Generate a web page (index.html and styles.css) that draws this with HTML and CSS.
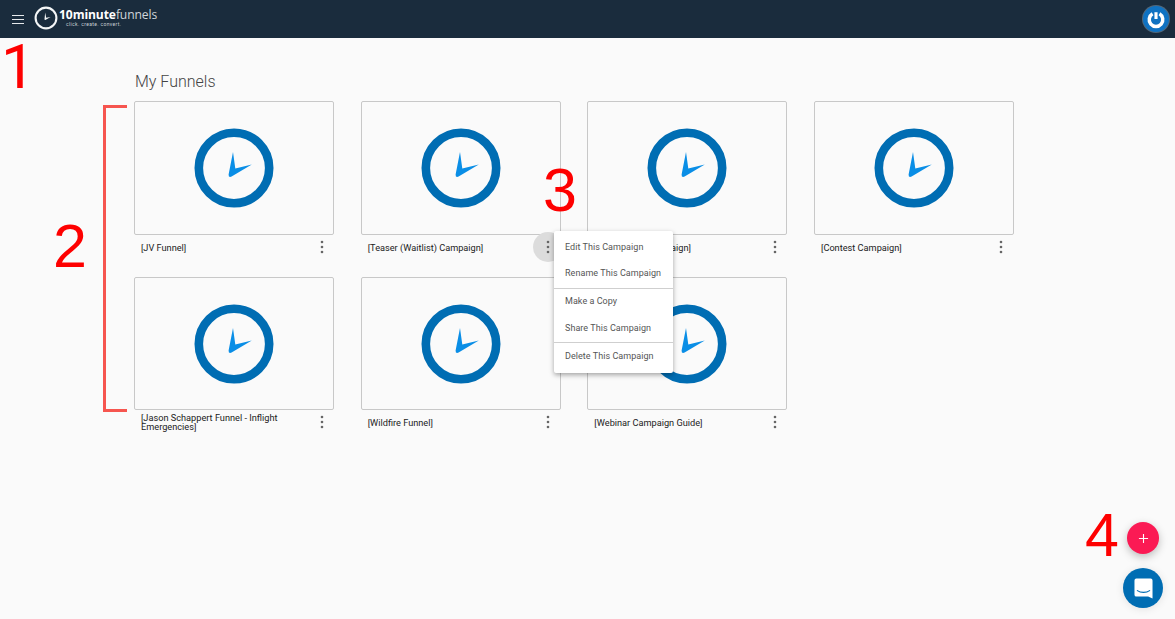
FILE: index.html
```html
<!DOCTYPE html>
<html lang="en">
<head>
<meta charset="utf-8">
<title>My Funnels</title>
<link rel="stylesheet" href="styles.css">
</head>
<body>
<svg class="defs" width="0" height="0" aria-hidden="true">
  <symbol id="clock" viewBox="0 0 80 80">
    <circle cx="40" cy="40" r="35.2" fill="none" stroke="#006db3" stroke-width="8.6"/>
    <path d="M39 24 L41.3 40.4 L57.8 36.6 L37.6 48.6 Q34.4 49.8 34.6 46.4 Z" fill="#0a8ee6"/>
  </symbol>
  <symbol id="dots" viewBox="0 0 4 14">
    <circle cx="2" cy="2" r="1.3"/><circle cx="2" cy="7" r="1.3"/><circle cx="2" cy="12" r="1.3"/>
  </symbol>
</svg>

<header class="topbar">
  <button class="menu-btn" aria-label="Menu"><span></span><span></span><span></span></button>
  <div class="logo">
    <svg class="logo-mark" viewBox="0 0 24 24">
      <circle cx="12" cy="12" r="10.4" fill="none" stroke="#f4f6f7" stroke-width="2.1"/>
      <path d="M11.2 6.6 L12.2 11.8 L16.6 11 L11.8 13.8 Q10.4 14.2 10.5 13 Z" fill="#f4f6f7"/>
    </svg>
    <div class="logo-text">
      <div class="logo-name"><b>10minute</b>funnels</div>
      <div class="logo-tag">click. create. convert.</div>
    </div>
  </div>
  <div class="avatar">
    <svg viewBox="0 0 24 24" width="22" height="22">
      <path d="M8.2 6.4 A7.4 7.4 0 1 0 15.8 6.4" fill="none" stroke="#fff" stroke-width="3.8"/>
      <rect x="10.3" y="4.6" width="3.4" height="7.4" fill="#fff"/>
    </svg>
  </div>
</header>

<main class="content">
  <h1 class="title">My Funnels</h1>
  <section class="grid">
    <article class="card">
      <div class="thumb"><svg class="clock"><use href="#clock"/></svg></div>
      <div class="meta"><p class="name">[JV Funnel]</p><button class="more"><svg><use href="#dots"/></svg></button></div>
    </article>
    <article class="card">
      <div class="thumb"><svg class="clock"><use href="#clock"/></svg></div>
      <div class="meta">
        <p class="name">[Teaser (Waitlist) Campaign]</p>
        <button class="more active"><svg><use href="#dots"/></svg></button>
      </div>
    </article>
    <article class="card">
      <div class="thumb"><svg class="clock"><use href="#clock"/></svg></div>
      <div class="meta"><p class="name">[Lead Pages Campaign]</p><button class="more"><svg><use href="#dots"/></svg></button></div>
    </article>
    <article class="card">
      <div class="thumb"><svg class="clock"><use href="#clock"/></svg></div>
      <div class="meta"><p class="name">[Contest Campaign]</p><button class="more"><svg><use href="#dots"/></svg></button></div>
    </article>
    <article class="card">
      <div class="thumb"><svg class="clock"><use href="#clock"/></svg></div>
      <div class="meta"><p class="name">[Jason Schappert Funnel - Inflight Emergencies]</p><button class="more"><svg><use href="#dots"/></svg></button></div>
    </article>
    <article class="card">
      <div class="thumb"><svg class="clock"><use href="#clock"/></svg></div>
      <div class="meta"><p class="name">[Wildfire Funnel]</p><button class="more"><svg><use href="#dots"/></svg></button></div>
    </article>
    <article class="card">
      <div class="thumb"><svg class="clock"><use href="#clock"/></svg></div>
      <div class="meta"><p class="name">[Webinar Campaign Guide]</p><button class="more"><svg><use href="#dots"/></svg></button></div>
    </article>
  </section>
</main>

<nav class="menu">
  <ul class="menu-group">
    <li>Edit This Campaign</li>
    <li>Rename This Campaign</li>
  </ul>
  <ul class="menu-group">
    <li>Make a Copy</li>
    <li>Share This Campaign</li>
  </ul>
  <ul class="menu-group">
    <li>Delete This Campaign</li>
  </ul>
</nav>

<button class="fab" aria-label="Add">
  <svg viewBox="0 0 12 12" width="11" height="11"><path d="M6 1v10M1 6h10" stroke="#fff" stroke-width="1.2" fill="none"/></svg>
</button>
<button class="chat" aria-label="Chat">
  <svg viewBox="0 0 20 22" width="19" height="21">
    <path d="M2.5 0.5h15a2 2 0 0 1 2 2V21.5l-4.6-2H2.5a2 2 0 0 1-2-2V2.5a2 2 0 0 1 2-2Z" fill="#fff"/>
    <path d="M3.5 13.2c3.6 2.5 9.4 2.5 13 0" fill="none" stroke="#006db3" stroke-width="1.1" stroke-linecap="round"/>
  </svg>
</button>

<span class="mark mark-1">1</span>
<span class="mark mark-2">2</span>
<span class="mark mark-3">3</span>
<span class="mark mark-4">4</span>
<div class="bracket"></div>
</body>
</html>
```

FILE: styles.css
```css
* { box-sizing: border-box; }

html, body {
  margin: 0;
  height: 619px;
  overflow: hidden;
  background: #fafafa;
  font-family: Roboto, "Liberation Sans", sans-serif;
  color: #212121;
}

.defs { position: absolute; }

.topbar {
  height: 38px;
  background: #1a2c3d;
  display: flex;
  align-items: center;
  padding: 0 6px 0 12px;
}

.menu-btn {
  width: 12px;
  height: 9px;
  padding: 0;
  border: 0;
  background: none;
  display: flex;
  flex-direction: column;
  justify-content: space-between;
  margin-right: 10px;
  margin-top: 1px;
}
.menu-btn span {
  display: block;
  height: 1.2px;
  background: #e6e9ec;
}

.logo {
  display: flex;
  align-items: center;
  color: #fff;
  margin-bottom: 2px;
}
.logo-mark { width: 24px; height: 24px; margin-right: 1px; }
.logo-text { margin-top: -1px; }
.logo-name {
  font-family: "Open Sans", "Liberation Sans", sans-serif;
  font-size: 12.1px;
  line-height: 13px;
  color: #cfd5da;
  letter-spacing: -0.1px;
}
.logo-name b { font-weight: 700; color: #fff; }
.logo-tag {
  font-size: 5px;
  line-height: 6px;
  margin-left: 7px;
  color: #c9d0d6;
  letter-spacing: 0.35px;
}

.avatar {
  margin-left: auto;
  width: 26px;
  height: 26px;
  border-radius: 50%;
  background: #0f72c2;
  box-shadow: 0 0 0 1px #51677a;
  display: flex;
  align-items: center;
  justify-content: center;
}

.content { padding: 33px 0 0 134px; }

.title {
  margin: 0 0 9px 1px;
  font-size: 16px;
  line-height: 21px;
  font-weight: 300;
  color: #444;
}

.grid {
  display: grid;
  grid-template-columns: repeat(4, 226.67px);
  grid-auto-rows: 176px;
  justify-content: start;
}

.card { width: 200px; }

.thumb {
  height: 134px;
  border: 1px solid #c8c8c8;
  border-radius: 2px;
  background: #fafafa;
  display: flex;
  align-items: center;
  justify-content: center;
}
.card:nth-child(n+5) .thumb { height: 133px; }
.clock { width: 80px; height: 80px; }

.meta {
  display: flex;
  align-items: center;
  justify-content: space-between;
  height: 25px;
  padding: 0 0 1px 7px;
}
.name {
  margin: 0;
  width: 150px;
  font-size: 9.2px;
  line-height: 9px;
  color: #222;
}
.more {
  position: relative;
  width: 30px;
  height: 30px;
  flex: none;
  margin-right: -2.5px;
  padding: 0;
  border: 0;
  border-radius: 50%;
  background: none;
  display: flex;
  align-items: center;
  justify-content: center;
  color: #666;
}
.more svg { width: 4px; height: 14px; fill: currentColor; }
.more.active { background: #dcdcdc; }

.menu {
  position: absolute;
  left: 554px;
  top: 231px;
  width: 119px;
  height: 142px;
  background: #fff;
  border-radius: 2px;
  box-shadow: 0 2px 5px rgba(0,0,0,.35);
  font-size: 9px;
  color: #555;
}
.menu-group { list-style: none; margin: 0; padding: 3px 0 2px; border-bottom: 1px solid #cfcfcf; }
.menu-group:first-child { padding-top: 3px; height: 58px; }
.menu-group:nth-child(2) { height: 54px; padding-top: 0; }
.menu-group:nth-child(2) li:first-child { height: 24px; line-height: 24px; }
.menu-group:last-child { border-bottom: 0; padding-top: 0; }
.menu li { height: 26px; line-height: 26px; padding-left: 11px; white-space: nowrap; letter-spacing: 0.05px; }
.menu-group:nth-child(2) li:last-child { height: 28px; line-height: 30px; }

.fab, .chat {
  position: absolute;
  border: 0;
  padding: 0;
  border-radius: 50%;
  display: flex;
  align-items: center;
  justify-content: center;
}
.fab {
  left: 1127px;
  top: 522px;
  width: 32px;
  height: 32px;
  background: #fb1a54;
  box-shadow: 0 3px 8px rgba(0,0,0,.25);
}
.chat {
  left: 1123px;
  top: 568px;
  width: 40px;
  height: 40px;
  background: #006db3;
  box-shadow: 0 1px 8px rgba(0,0,0,.1);
}

.mark {
  position: absolute;
  color: #fe0000;
  font-family: "Liberation Sans", Arial, sans-serif;
  font-size: 61px;
  line-height: 60px;
}
.mark-1 { left: 1px; top: 37px; font-family: Roboto, sans-serif; }
.mark-2 { left: 53px; top: 216px; }
.mark-3 { left: 543px; top: 160px; }
.mark-4 { left: 1085px; top: 505px; }

.bracket {
  position: absolute;
  left: 103px;
  top: 105px;
  width: 24px;
  height: 307px;
  border: 3px solid #f6554f;
  border-right: 0;
}
```
